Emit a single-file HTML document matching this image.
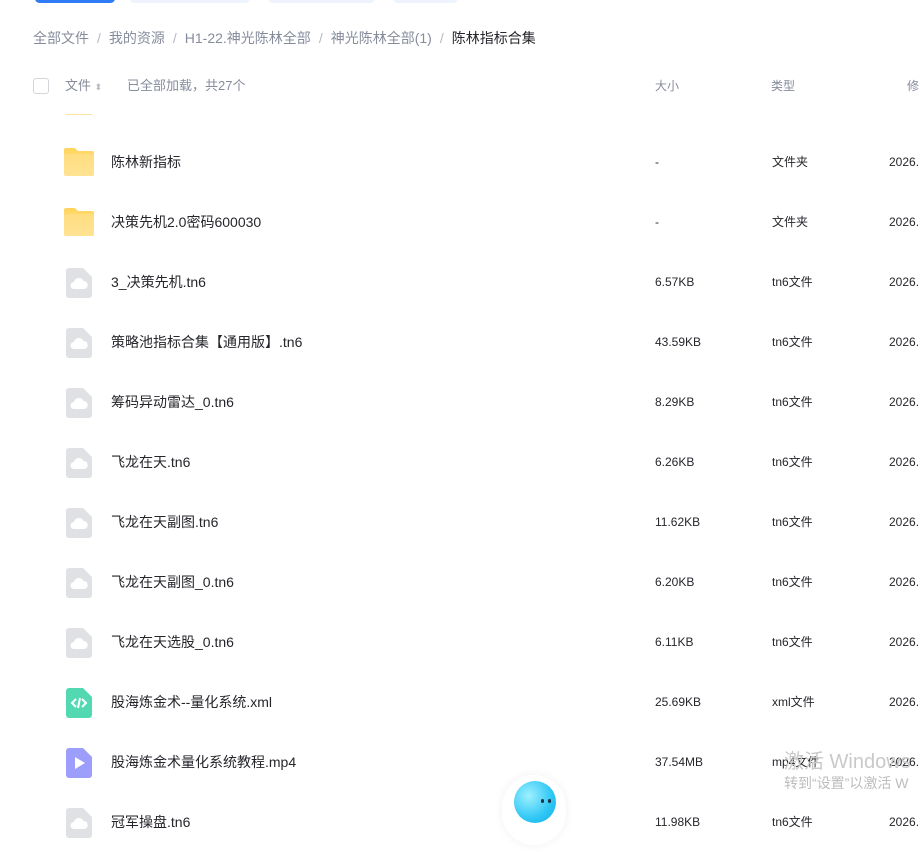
<!DOCTYPE html>
<html><head><meta charset="utf-8"><style>
body{margin:0;width:920px;height:829px;overflow:hidden;background:#fff;font-family:"Liberation Sans","Noto Sans CJK SC",sans-serif;position:relative}
.a{position:absolute;white-space:nowrap}
.bc{top:28px;left:33px;font-size:14px;color:#878c9c;line-height:20px}
.bc span.s{margin:0 8px;color:#b6b9c2}
.bc b{font-weight:normal;color:#25262b}
.hd{font-size:12px;color:#878c9c;top:76px;line-height:20px}
.row{position:absolute;left:0;width:920px;height:60px;line-height:60px;color:#25262b}
.row .n{position:absolute;left:111px;top:0;font-size:14px}
.row .z{position:absolute;left:655px;top:0;font-size:12px}
.row .t{position:absolute;left:772px;top:0;font-size:12px}
.row .d{position:absolute;left:889px;top:0;font-size:12px}
.ic{position:absolute;left:64px;top:16px}
</style></head><body>
<div class="a" style="left:35px;top:-6px;width:80px;height:9px;background:#2f7bf5;border-radius:5px"></div>
<div class="a" style="left:130px;top:-6px;width:120px;height:9px;background:#eef3fd;border-radius:5px"></div>
<div class="a" style="left:268px;top:-6px;width:107px;height:9px;background:#eef3fd;border-radius:5px"></div>
<div class="a" style="left:393px;top:-6px;width:65px;height:9px;background:#eef3fd;border-radius:5px"></div>
<div class="a bc">全部文件<span class="s">/</span>我的资源<span class="s">/</span>H1-22.神光陈林全部<span class="s">/</span>神光陈林全部(1)<span class="s">/</span><b>陈林指标合集</b></div>
<div class="a" style="left:33px;top:78px;width:14px;height:14px;border:1px solid #d3d5db;border-radius:3px"></div>
<div class="a hd" style="left:65px;font-size:13px">文件 <span style="font-size:9px;color:#b6b9c2">⬍</span></div>
<div class="a hd" style="left:127px;font-size:13px">已全部加载，共27个</div>
<div class="a hd" style="left:655px">大小</div>
<div class="a hd" style="left:771px">类型</div>
<div class="a hd" style="left:907px">修</div>
<div class="a" style="left:66px;top:114px;width:26px;height:1px;background:#ffe39a"></div>
<div id="rows"></div>
<div class="a" style="left:784px;top:745px;font-size:20px;color:#c9c9c9">激活 Windows</div>
<div class="a" style="left:784px;top:773px;font-size:14px;color:#bdbdbd">转到“设置”以激活 W</div>
<div class="a" style="left:502px;top:775px;width:64px;height:70px;border-radius:32px;background:#fff;box-shadow:0 0 10px rgba(0,0,0,.06)"></div>
<div class="a" style="left:514px;top:781px;width:42px;height:42px;border-radius:50%;background:radial-gradient(circle at 35% 35%,#9ff0ff,#2ec7f5 60%,#1aa8e8)"></div>
<div class="a" style="left:541px;top:799px;width:3px;height:4px;background:#234;border-radius:2px"></div>
<div class="a" style="left:548px;top:799px;width:3px;height:4px;background:#234;border-radius:2px"></div>
<script>
var F='<svg class="ic" width="30" height="28" viewBox="0 0 30 28"><defs><linearGradient id="g" x1="0" y1="0" x2="0" y2="1"><stop offset="0" stop-color="#ffd45a"/><stop offset="1" stop-color="#ffe9a8"/></linearGradient></defs><path d="M2 0h9l3 3h14a2 2 0 0 1 2 2v21a2 2 0 0 1-2 2H2a2 2 0 0 1-2-2V2a2 2 0 0 1 2-2z" fill="url(#g)"/><rect x="0" y="6" width="30" height="22" rx="2" fill="#ffe08a" opacity=".7"/></svg>';
var C='<svg class="ic" style="left:66px;top:16px" width="26" height="30" viewBox="0 0 26 30"><path d="M3 0h14l9 9v18a3 3 0 0 1-3 3H3a3 3 0 0 1-3-3V3a3 3 0 0 1 3-3z" fill="#dfe1e5"/><path d="M8 21a3.5 3.5 0 0 1 0-7 5 5 0 0 1 9.5-1 4 4 0 0 1 0.5 8z" fill="#fff"/></svg>';
var X='<svg class="ic" style="left:66px;top:16px" width="26" height="30" viewBox="0 0 26 30"><path d="M3 0h14l9 9v18a3 3 0 0 1-3 3H3a3 3 0 0 1-3-3V3a3 3 0 0 1 3-3z" fill="#52d9b2"/><path d="M10 11l-4 4 4 4M16 11l4 4-4 4M14 10l-2 10" stroke="#fff" stroke-width="2" fill="none"/></svg>';
var M='<svg class="ic" style="left:66px;top:16px" width="26" height="30" viewBox="0 0 26 30"><path d="M3 0h14l9 9v18a3 3 0 0 1-3 3H3a3 3 0 0 1-3-3V3a3 3 0 0 1 3-3z" fill="#9d9dfc"/><path d="M9 9l10 6-10 6z" fill="#fff"/></svg>';
var R=[[F,'陈林新指标','-','文件夹'],[F,'决策先机2.0密码600030','-','文件夹'],[C,'3_决策先机.tn6','6.57KB','tn6文件'],[C,'策略池指标合集【通用版】.tn6','43.59KB','tn6文件'],[C,'筹码异动雷达_0.tn6','8.29KB','tn6文件'],[C,'飞龙在天.tn6','6.26KB','tn6文件'],[C,'飞龙在天副图.tn6','11.62KB','tn6文件'],[C,'飞龙在天副图_0.tn6','6.20KB','tn6文件'],[C,'飞龙在天选股_0.tn6','6.11KB','tn6文件'],[X,'股海炼金术--量化系统.xml','25.69KB','xml文件'],[M,'股海炼金术量化系统教程.mp4','37.54MB','mp4文件'],[C,'冠军操盘.tn6','11.98KB','tn6文件']];
var h='';R.forEach(function(r,i){h+='<div class="row" style="top:'+(132+i*60)+'px">'+r[0]+'<div class="n">'+r[1]+'</div><div class="z">'+r[2]+'</div><div class="t">'+r[3]+'</div><div class="d">2026.</div></div>'});
document.getElementById('rows').innerHTML=h;
</script>
</body></html>
